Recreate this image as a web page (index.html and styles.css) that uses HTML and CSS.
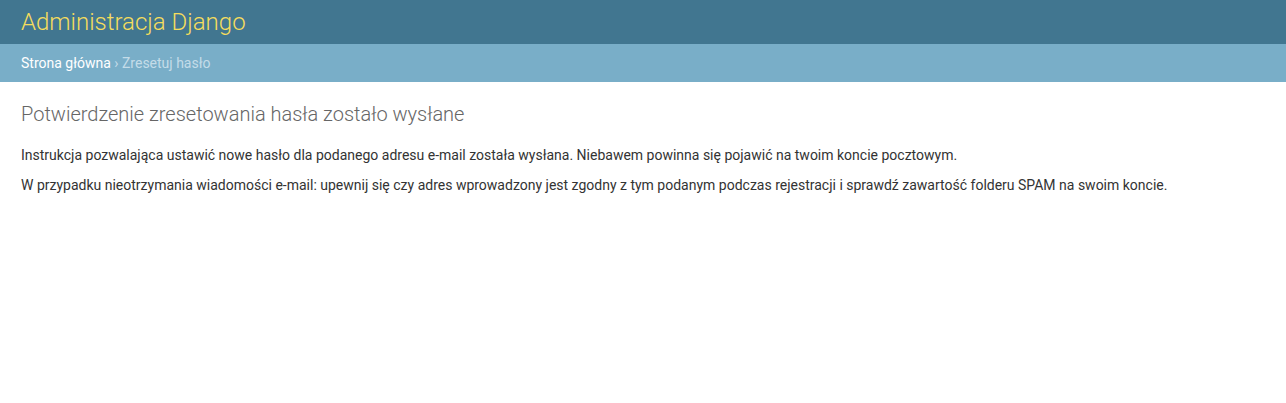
FILE: index.html
```html
<!DOCTYPE html>
<html lang="pl">
<head>
<meta charset="utf-8">
<title>Potwierdzenie zresetowania hasła zostało wysłane</title>
<link rel="stylesheet" href="styles.css">
</head>
<body>
<div class="header">
  <h1 class="branding">Administracja Django</h1>
</div>
<div class="breadcrumbs">
  <a href="#">Strona główna</a> › Zresetuj hasło
</div>
<div class="content">
  <h1 class="title">Potwierdzenie zresetowania hasła zostało wysłane</h1>
  <p>Instrukcja pozwalająca ustawić nowe hasło dla podanego adresu e-mail została wysłana. Niebawem powinna się pojawić na twoim koncie pocztowym.</p>
  <p>W przypadku nieotrzymania wiadomości e-mail: upewnij się czy adres wprowadzony jest zgodny z tym podanym podczas rejestracji i sprawdź zawartość folderu SPAM na swoim koncie.</p>
</div>
</body>
</html>
```
FILE: styles.css
```css
html, body {
  margin: 0;
  padding: 0;
}
body {
  font-family: Roboto, "Liberation Sans", sans-serif;
  font-size: 14px;
  color: #333;
  background: #fff;
}
.header {
  background: #417690;
  padding: 8px 21px;
  height: 28px;
  display: flex;
  align-items: center;
}
.branding {
  margin: 0;
  font-size: 24px;
  font-weight: 300;
  color: #f5dd5d;
}
.breadcrumbs {
  background: #79aec8;
  padding: 10px 21px;
  line-height: 18px;
  font-size: 14px;
  color: #c4dce8;
}
.breadcrumbs a {
  color: #fff;
  text-decoration: none;
}
.content {
  padding: 20px 21px;
}
.title {
  margin: 0 0 20px;
  font-size: 20px;
  font-weight: 300;
  color: #666;
}
.content p {
  margin: 0 0 11px;
  line-height: 19px;
}
```
